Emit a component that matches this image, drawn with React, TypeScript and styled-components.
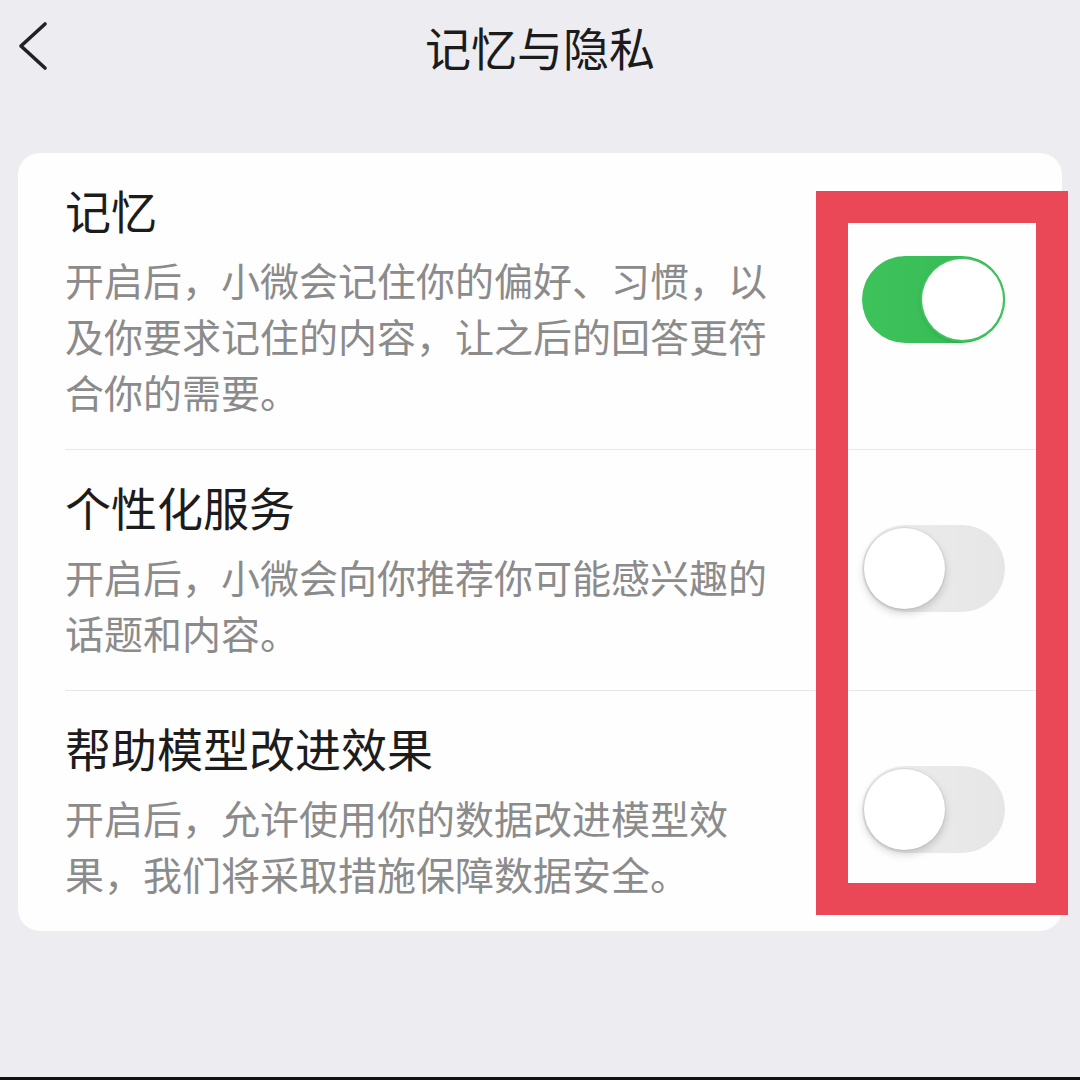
import React, { useState } from 'react';
import styled, { createGlobalStyle } from 'styled-components';

const GlobalStyle = createGlobalStyle`
  html, body {
    margin: 0;
    padding: 0;
    background: #ededf1;
  }
  body {
    font-family: "Noto Sans CJK SC", "Noto Sans", sans-serif;
  }
`;

const Page = styled.div`
  position: relative;
  width: 1080px;
  height: 1080px;
  display: flex;
  flex-direction: column;
  background: #ededf1;
  overflow: hidden;
`;

const Header = styled.header`
  height: 96px;
  display: grid;
  grid-template-columns: 1fr auto 1fr;
  align-items: center;
`;

const BackButton = styled.button`
  justify-self: start;
  margin-left: 16px;
  margin-top: -4px;
  padding: 0;
  border: none;
  background: none;
  display: flex;
  align-items: center;
  cursor: pointer;
`;

const Title = styled.h1`
  margin: -4px 0 0;
  font-size: 46px;
  line-height: 60px;
  font-weight: 400;
  color: #1b1b1b;
`;

const Card = styled.section`
  margin: 57px 18px 0;
  background: #fefefe;
  border-radius: 22px;
  overflow: hidden;
`;

const Row = styled.div`
  display: flex;
  align-items: center;
  justify-content: space-between;
  padding: 26px 57px 30px 47px;
`;

const Divider = styled.div`
  height: 1px;
  margin-left: 47px;
  background: #e8e8ea;
`;

const TextBlock = styled.div`
  width: 712px;
`;

const RowTitle = styled.div`
  font-size: 46px;
  line-height: 60px;
  font-weight: 400;
  color: #1c1c1c;
`;

const RowDesc = styled.p`
  margin: 12px 0 0;
  font-size: 39px;
  line-height: 56px;
  color: #8b8b8b;
`;

const Track = styled.button<{ $on: boolean }>`
  position: relative;
  flex: none;
  width: 143px;
  height: 87px;
  padding: 0;
  border: none;
  border-radius: 44px;
  cursor: pointer;
  background: ${(p) =>
    p.$on
      ? 'linear-gradient(90deg, #3ec25c 0%, #38bd57 60%, #31b14e 100%)'
      : 'linear-gradient(90deg, #ededee 0%, #e6e6e7 100%)'};
  transition: background 0.2s;
`;

const Knob = styled.span<{ $on: boolean }>`
  position: absolute;
  top: 3px;
  left: ${(p) => (p.$on ? '60px' : '2px')};
  width: 81px;
  height: 81px;
  border-radius: 50%;
  background: #ffffff;
  box-shadow: ${(p) =>
    p.$on
      ? '0 0 0 2px #41c25f, 0 2px 5px rgba(0, 80, 20, 0.25)'
      : '0 0 0 1px rgba(0, 0, 0, 0.06), 0 4px 8px rgba(0, 0, 0, 0.18)'};
  transition: left 0.2s;
`;

const Highlight = styled.div`
  position: absolute;
  left: 816px;
  top: 191px;
  width: 252px;
  height: 724px;
  box-sizing: border-box;
  border: 32px solid #ea4856;
  pointer-events: none;
`;

const BottomEdge = styled.div`
  margin-top: auto;
  height: 3px;
  background: #111111;
`;

type Setting = {
  key: string;
  title: string;
  desc: string;
  on: boolean;
};

const settings: Setting[] = [
  {
    key: 'memory',
    title: '记忆',
    desc: '开启后，小微会记住你的偏好、习惯，以及你要求记住的内容，让之后的回答更符合你的需要。',
    on: true,
  },
  {
    key: 'personal',
    title: '个性化服务',
    desc: '开启后，小微会向你推荐你可能感兴趣的话题和内容。',
    on: false,
  },
  {
    key: 'improve',
    title: '帮助模型改进效果',
    desc: '开启后，允许使用你的数据改进模型效果，我们将采取措施保障数据安全。',
    on: false,
  },
];

const Toggle = ({ on, onChange }: { on: boolean; onChange: () => void }) => (
  <Track $on={on} onClick={onChange} aria-pressed={on}>
    <Knob $on={on} />
  </Track>
);

export default function App() {
  const [values, setValues] = useState<Record<string, boolean>>(
    Object.fromEntries(settings.map((s) => [s.key, s.on]))
  );

  const flip = (key: string) =>
    setValues((v) => ({ ...v, [key]: !v[key] }));

  return (
    <Page>
      <GlobalStyle />
      <Header>
        <BackButton aria-label="返回">
          <svg width="34" height="52" viewBox="0 0 34 52" fill="none">
            <path
              d="M29 4 L5 26 L29 48"
              stroke="#222"
              strokeWidth="3.6"
              strokeLinecap="round"
              strokeLinejoin="round"
            />
          </svg>
        </BackButton>
        <Title>记忆与隐私</Title>
        <span />
      </Header>

      <Card>
        {settings.map((s, i) => (
          <React.Fragment key={s.key}>
            {i > 0 && <Divider />}
            <Row>
              <TextBlock>
                <RowTitle>{s.title}</RowTitle>
                <RowDesc>{s.desc}</RowDesc>
              </TextBlock>
              <Toggle on={values[s.key]} onChange={() => flip(s.key)} />
            </Row>
          </React.Fragment>
        ))}
      </Card>

      <Highlight />
      <BottomEdge />
    </Page>
  );
}
